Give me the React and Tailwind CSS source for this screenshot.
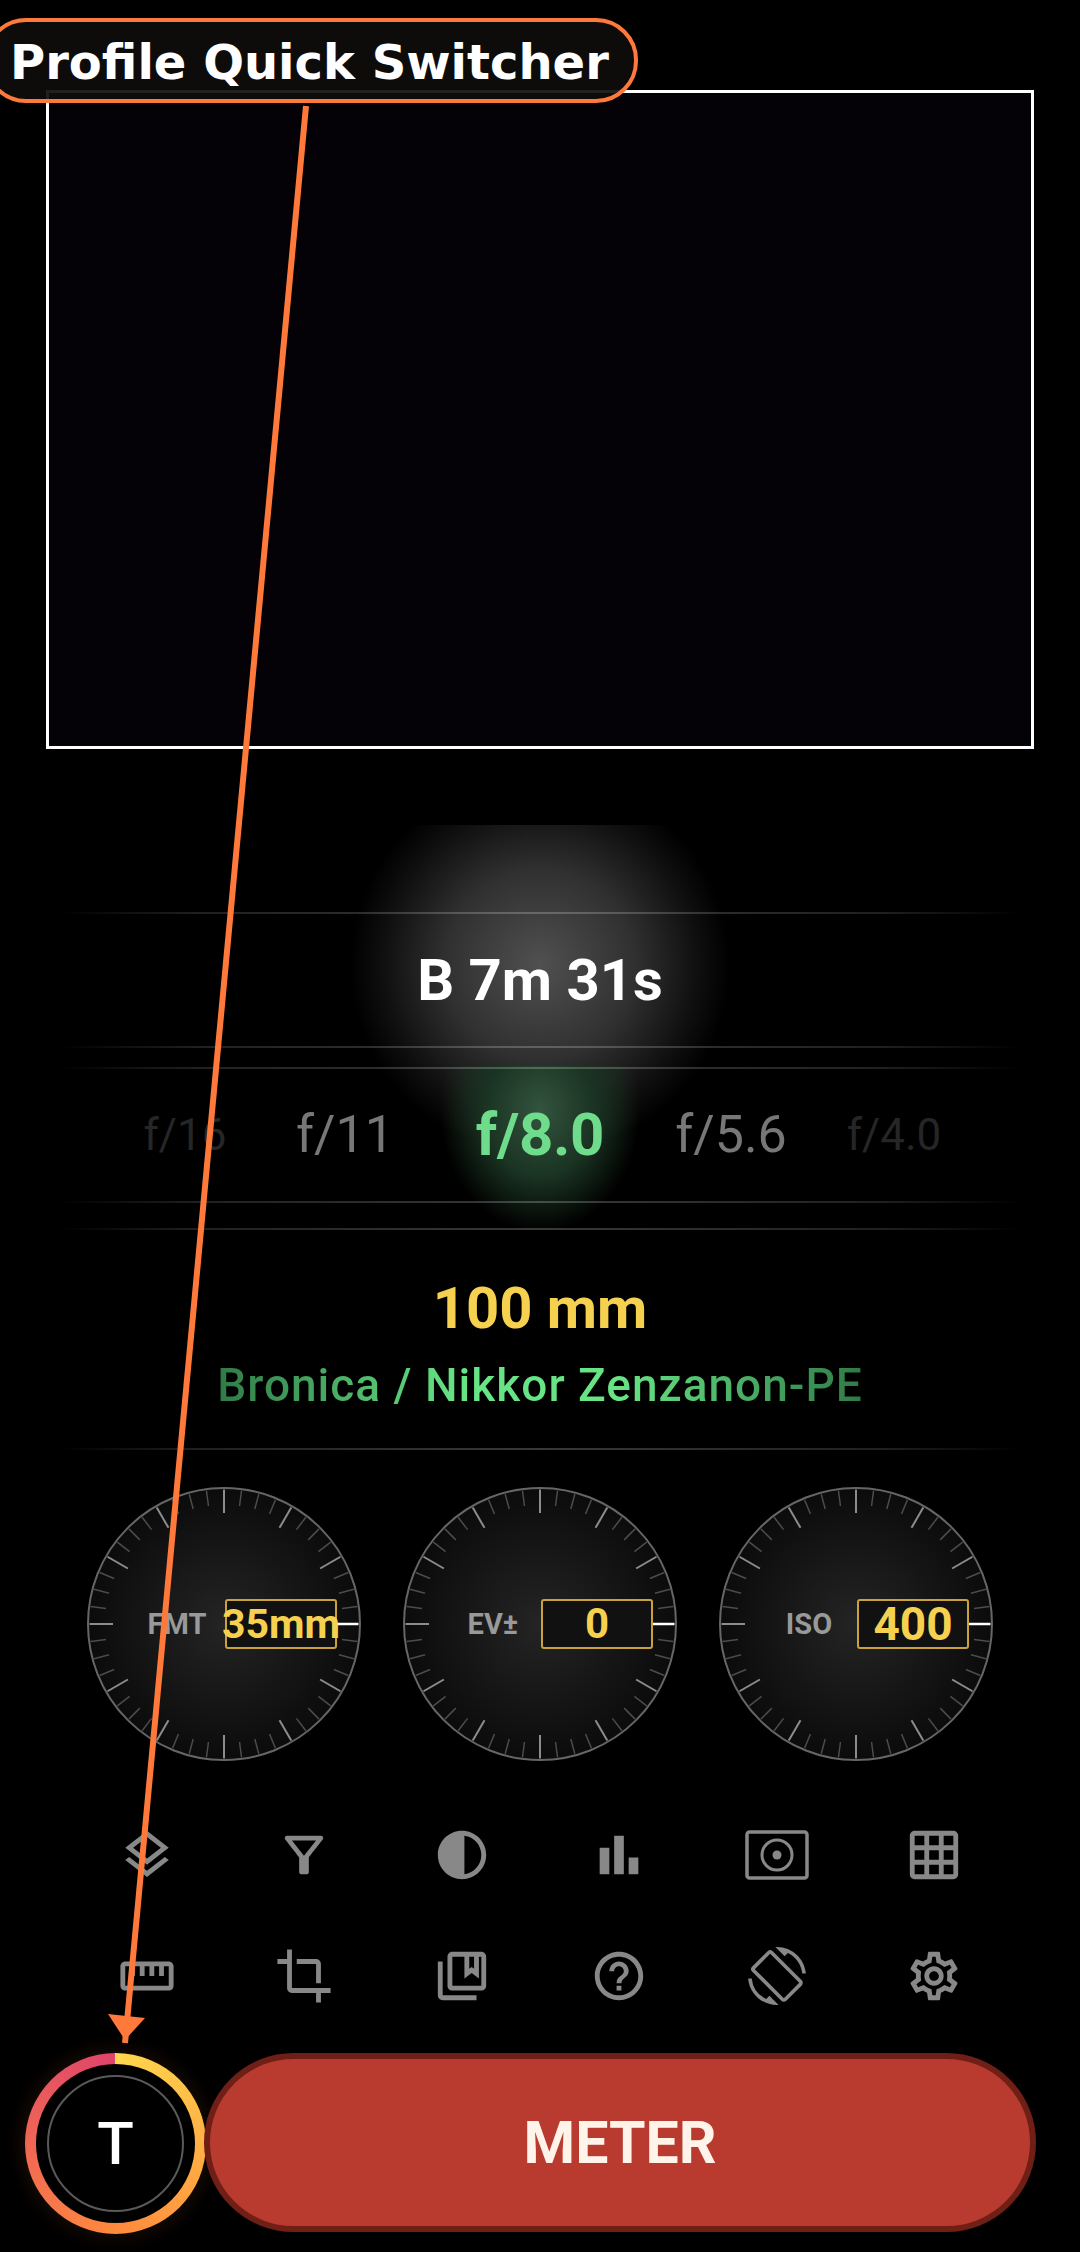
import React from 'react';
import {
  MdOutlineLayers,
  MdOutlineFilterAlt,
  MdContrast,
  MdBarChart,
  MdOutlineGridOn,
  MdOutlineStraighten,
  MdCrop,
  MdOutlineCollectionsBookmark,
  MdHelpOutline,
  MdScreenRotation,
  MdOutlineSettings,
} from 'react-icons/md';

const Rule = () => (
  <div className="mx-[58px] h-[2px] bg-[linear-gradient(to_right,transparent,rgba(255,255,255,0.13)_15%,rgba(255,255,255,0.22)_50%,rgba(255,255,255,0.13)_85%,transparent)]" />
);

const MeterIcon = ({ className = '' }) => (
  <svg viewBox="0 0 64 50" className={className} fill="none" stroke="currentColor">
    <rect x="2" y="2" width="60" height="46" rx="2.5" strokeWidth="3.5" />
    <circle cx="32" cy="25" r="15" strokeWidth="3" />
    <circle cx="32" cy="25" r="4.5" fill="currentColor" stroke="none" />
  </svg>
);

const ticks = Array.from({ length: 48 }, (_, i) => {
  const a = (i * 7.5 * Math.PI) / 180;
  const major = i % 4 === 0;
  const r1 = 134.5;
  const r2 = major ? 111 : 119;
  return {
    x1: 137 + Math.cos(a) * r1,
    y1: 137 + Math.sin(a) * r1,
    x2: 137 + Math.cos(a) * r2,
    y2: 137 + Math.sin(a) * r2,
    stroke: i === 0 ? '#ffffff' : major ? '#8c8c8c' : '#4c4c4c',
    width: i === 0 ? 2.5 : major ? 2 : 1.5,
  };
});

const Dial = ({ label, value, size = 'text-[42px]' }) => (
  <div className="relative flex h-[274px] w-[274px] items-center justify-end rounded-full border-2 border-[#666] bg-[radial-gradient(circle,#242424_0%,#0a0a0a_75%,#050505_100%)]">
    <svg viewBox="0 0 274 274" className="absolute left-[-2px] top-[-2px] h-[274px] w-[274px]">
      {ticks.map((t, i) => (
        <line key={i} x1={t.x1} y1={t.y1} x2={t.x2} y2={t.y2} stroke={t.stroke} strokeWidth={t.width} />
      ))}
    </svg>
    <div className="relative w-[96px] text-center text-[29px] font-bold leading-none text-[#999]">{label}</div>
    <div className={`relative mr-[22px] flex h-[50px] w-[112px] shrink-0 items-center justify-center whitespace-nowrap rounded-[3px] border-2 border-[#c9a23c] bg-[#111] font-bold leading-none text-[#f6d150] ${size}`}>
      {value}
    </div>
  </div>
);

const iconRows = [
  [
    <MdOutlineLayers key="a" size={58} />,
    <MdOutlineFilterAlt key="b" size={58} />,
    <MdContrast key="c" size={58} />,
    <MdBarChart key="d" size={58} />,
    <MeterIcon key="e" className="h-[50px] w-[64px]" />,
    <MdOutlineGridOn key="f" size={58} />,
  ],
  [
    <MdOutlineStraighten key="a" size={58} />,
    <MdCrop key="b" size={58} />,
    <MdOutlineCollectionsBookmark key="c" size={58} />,
    <MdHelpOutline key="d" size={58} />,
    <MdScreenRotation key="e" size={58} />,
    <MdOutlineSettings key="f" size={58} />,
  ],
];

export default function App() {
  return (
    <div className="relative h-[2252px] w-[1080px] overflow-hidden bg-black font-[Roboto,sans-serif] text-white">
      {/* glows behind the shutter and aperture rows */}
      <div className="absolute left-[350px] top-[825px] h-[310px] w-[380px] bg-[radial-gradient(ellipse_190px_190px_at_50%_45%,#505050_0%,#303030_50%,#101010_82%,transparent_100%)]" />
      <div className="absolute left-[440px] top-[1066px] h-[164px] w-[200px] bg-[radial-gradient(ellipse_100px_122px_at_50%_27%,#33543e_0%,#1a3322_55%,transparent_100%)]" />

      <div className="relative flex flex-col pt-[90px]">
        <div className="mx-[46px] h-[659px] w-[988px] border-[3px] border-white bg-[#050207]" />

        <div className="mt-[163px]">
          <Rule />
          <div className="flex h-[132px] items-center justify-center text-[58px] font-bold leading-none">
            B 7m 31s
          </div>
          <Rule />
        </div>

        <div className="mt-[19px]">
          <Rule />
          <div className="ml-[105px] grid h-[132px] grid-cols-[160px_160px_230px_152px_174px] items-center text-center leading-none">
            <div className="text-[44px] text-[#262626]">f/16</div>
            <div className="text-[52px] text-[#777]">f/11</div>
            <div className="text-[60px] font-bold tracking-[-0.3px] text-[#6fdc8c]">f/8.0</div>
            <div className="text-[52px] text-[#777]">f/5.6</div>
            <div className="text-[44px] text-[#262626]">f/4.0</div>
          </div>
          <Rule />
        </div>

        <div className="mt-[25px]">
          <Rule />
          <div className="flex h-[218px] flex-col items-center pt-[48px]">
            <div className="text-[58px] font-bold leading-[60px] text-[#f6d150]">100 mm</div>
            <div className="mt-[22px] bg-[linear-gradient(to_right,#2f7a47_0%,#67e585_38%,#67e585_62%,#2f7a47_100%)] bg-clip-text text-[46px] font-medium leading-[50px] tracking-[1px] text-transparent">
              Bronica / Nikkor Zenzanon-PE
            </div>
          </div>
          <Rule />
        </div>

        <div className="mt-[37px] flex justify-center gap-[42px]">
          <Dial label="FMT" value="35mm" size="text-[41px]" />
          <Dial label="EV±" value="0" />
          <Dial label="ISO" value="400" size="text-[46px]" />
        </div>

        <div className="ml-[68px] mt-[33px] w-[945px] text-[#888]">
          {iconRows.map((row, r) => (
            <div key={r} className="grid h-[121px] grid-cols-6 place-items-center">
              {row}
            </div>
          ))}
        </div>

        <div className="mt-[17px] flex items-start pl-[25px]">
          <div className="flex h-[181px] w-[181px] shrink-0 items-center justify-center rounded-full bg-[conic-gradient(#ffd84d_0%,#ff8a3d_50%,#e0436b_100%)] shadow-[0_0_22px_rgba(255,138,61,0.14)]">
            <div className="flex h-[159px] w-[159px] items-center justify-center rounded-full bg-black">
              <div className="flex h-[137px] w-[137px] items-center justify-center rounded-full border-2 border-[#5a5a5a] text-[60px] font-medium leading-none">
                T
              </div>
            </div>
          </div>
          <div className="-ml-[2px] flex h-[179px] w-[832px] items-center justify-center rounded-full border-[6px] border-[#6f1f16] bg-[#b93b2f] text-[59px] font-bold leading-none text-[#fff3ea]">
            METER
          </div>
        </div>
      </div>

      {/* annotation over the page */}
      <svg viewBox="0 0 1080 2252" className="absolute left-0 top-0 h-[2252px] w-[1080px]" fill="#ff7a3a">
        <line x1="306" y1="106" x2="125" y2="2043" stroke="#ff7a3a" strokeWidth="6" />
        <polygon points="108,2014 145,2018 125,2040" />
      </svg>
      <div className="absolute left-[-16px] top-[18px] flex h-[85px] w-[654px] items-center rounded-[42px] border-4 border-[#ff7a3a] bg-[rgba(15,12,12,0.92)] pl-[22px] pt-[2px] font-['DejaVu_Sans',sans-serif] text-[48px] font-bold leading-none text-white">
        Profile Quick Switcher
      </div>
    </div>
  );
}
